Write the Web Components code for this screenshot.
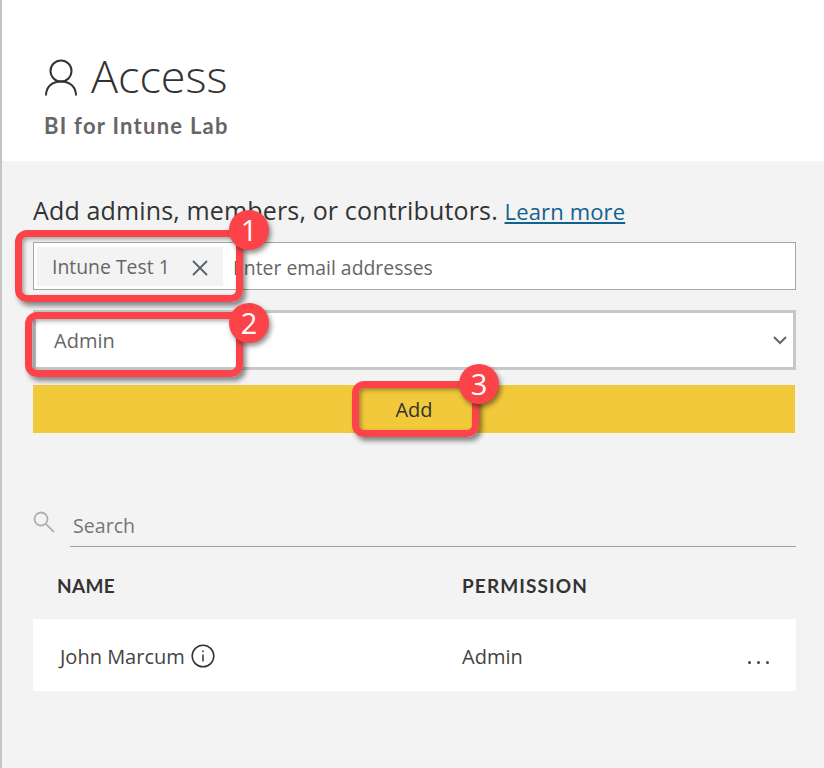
<!DOCTYPE html>
<html><head><meta charset="utf-8">
<style>
html,body{margin:0;padding:0;background:#f3f3f3;width:824px;height:768px;overflow:hidden}
body{font-family:"Open Sans","Liberation Sans",sans-serif;position:relative}
</style></head><body>
<access-panel>
  <access-header title-text="Access" sub="BI for Intune Lab"></access-header>
  <access-form></access-form>
  <access-list></access-list>
</access-panel>
<call-out n="1" style="--x:15px;--y:230px;--w:228px;--h:72px;--cx:249px;--cy:230px"></call-out>
<call-out n="2" style="--x:25px;--y:312px;--w:218px;--h:65px;--cx:249px;--cy:323px"></call-out>
<call-out n="3" style="--x:352px;--y:381px;--w:127px;--h:56px;--cx:479px;--cy:384px"></call-out>
<script>
function def(name,html,init){customElements.define(name,class extends HTMLElement{constructor(){super();const r=this.attachShadow({mode:'open'});r.innerHTML=html;}connectedCallback(){init&&init(this)}})}
def('access-panel',`<style>:host{display:block;width:824px;height:768px;box-sizing:border-box;border-left:2px solid #c4c4c4}</style><slot></slot>`);
def('access-header',`<style>
:host{display:block;background:#fff;height:161px;box-sizing:border-box;padding:46px 0 0 43px}
.t{display:flex;align-items:center;height:60px;gap:14px;color:#333;font-weight:300;font-size:45px;line-height:60px;font-family:"Open Sans",sans-serif}
svg{display:block;width:32px;height:37px;margin-top:2px}
.s{font:700 22px/26px "Lato",sans-serif;color:#666;letter-spacing:1.25px;margin-top:7px;margin-left:-1px}
</style><div class="t"><svg viewBox="0 0 32 37" fill="none" stroke="#333" stroke-width="2"><circle cx="16" cy="12" r="10.500"/><path d="M1 36.500c0-8.500 6-14 15-14s15 5.500 15 14"/></svg><span id="t"></span></div><div class="s" id="s"></div>`,e=>{e.shadowRoot.getElementById('t').textContent=e.getAttribute('title-text');e.shadowRoot.getElementById('s').textContent=e.getAttribute('sub')});
def('access-form',`<style>
:host{display:block;padding:30px 28px 0 31px;color:#333}
.h{font-size:25px;line-height:38px;height:51px;box-sizing:border-box;color:#333;white-space:nowrap;letter-spacing:.15px}
a{color:#11618f;text-decoration:underline;font-size:22px;letter-spacing:.15px}
.inp{height:48px;box-sizing:border-box;border:1px solid #a6a6a6;background:#fff;display:flex;align-items:center;padding-left:3px;color:#666;font-size:19.400px}
.inp>span{position:relative;top:1px}
.chip{width:186px;height:39px;background:#f3f3f3;display:flex;align-items:center;justify-content:space-between;box-sizing:border-box;padding:0 15px 0 15px;margin-right:10px}
.chip svg{width:16px;height:16px;display:block;margin-top:3px}
.sel{height:60px;margin-top:20px;box-sizing:border-box;border:3px solid #c8c8c8;background:#fff;display:flex;align-items:center;justify-content:space-between;padding:1px 6px 0 18px;color:#666;font-size:20px}
.sel svg{width:14px;height:9px;display:block}
.btn{height:48px;margin-top:15px;width:762px;background:#f2c93b;display:flex;align-items:center;justify-content:center;color:#333;font-size:20px}
</style>
<div class="h">Add admins, members, or contributors. <a>Learn more</a></div>
<div class="inp"><div class="chip"><span>Intune Test 1</span><svg viewBox="0 0 16 16" stroke="#5f6670" stroke-width="2" fill="none"><path d="M1 1l14 14M15 1L1 15"/></svg></div><span>Enter email addresses</span></div>
<div class="sel"><span>Admin</span><svg viewBox="0 0 14 9" stroke="#666" stroke-width="2" fill="none"><path d="M1 1l6 6 6-6"/></svg></div>
<div class="btn">Add</div>`);
def('access-list',`<style>
:host{display:block;padding:0 28px 0 31px;margin-top:75px}
.s{display:flex;align-items:flex-start;height:38px}
.s svg{width:22px;height:22px;display:block;margin-top:3px}
.f{margin-left:15px;flex:1;border-bottom:1px solid #a0a0a0;height:38px;padding-left:3px;color:#777;font-size:19.600px;line-height:36px}
.cols{display:flex;margin-top:24px;height:32px;align-items:center;font:700 19px/32px "Lato",sans-serif;color:#333;padding-left:24px}
.n{width:405px;letter-spacing:.3px}
.p{letter-spacing:1.100px}
.row{height:72px;margin-top:17px;background:#fff;display:flex;align-items:center;color:#444;font-size:20px;padding:2px 0 0 26px;box-sizing:border-box}
.row .a{width:403px;display:flex;align-items:center;gap:6px}
.row .a span{margin-left:1px}
.row .a svg{width:24px;height:24px;display:block}
.d{margin-left:auto;margin-right:27px;display:flex;gap:6px;margin-top:12px}
.d i{display:block;width:3px;height:3px;border-radius:50%;background:#444}
</style>
<div class="s"><svg viewBox="0 0 22 22" fill="none" stroke="#b0b0b0" stroke-width="1.800"><circle cx="8" cy="8" r="6.500"/><path d="M12.800 12.800L21 21"/></svg><div class="f">Search</div></div>
<div class="cols"><div class="n">NAME</div><div class="p">PERMISSION</div></div>
<div class="row"><div class="a"><span>John Marcum</span><svg viewBox="0 0 24 24" fill="none" stroke="#333" stroke-width="1.500"><circle cx="12" cy="12" r="10.800"/><path d="M12 10.500v7M12 6.500v1.800"/></svg></div><div>Admin</div><div class="d"><i></i><i></i><i></i></div></div>`);
def('call-out',`<style>
:host{display:contents}
.r{position:absolute;left:var(--x);top:var(--y);width:var(--w);height:var(--h);box-sizing:border-box;border:7px solid #fc4349;border-radius:12px;box-shadow:3px 4px 5px rgba(0,0,0,.45),inset 2px 2px 4px rgba(0,0,0,.35)}
.c{position:absolute;left:calc(var(--cx) - 20px);top:calc(var(--cy) - 20px);width:40px;height:40px;border-radius:50%;background:#fc4349;color:#fff;display:flex;align-items:center;justify-content:center;font:400 29px/40px "Open Sans",sans-serif;box-shadow:2px 3px 5px rgba(0,0,0,.45)}
</style><div class="r"></div><div class="c" id="c"></div>`,e=>{e.shadowRoot.getElementById('c').textContent=e.getAttribute('n')});
</script>
</body></html>
